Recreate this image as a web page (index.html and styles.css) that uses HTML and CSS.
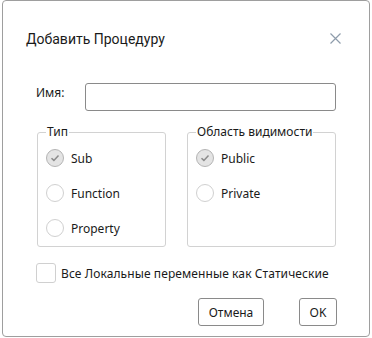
FILE: index.html
```html
<!DOCTYPE html>
<html lang="ru">
<head>
<meta charset="utf-8">
<title>Добавить Процедуру</title>
<link rel="stylesheet" href="styles.css">
</head>
<body>
<div class="dialog">
  <div class="header">
    <div class="title">Добавить Процедуру</div>
    <svg class="close" width="11" height="11" viewBox="0 0 11 11" aria-label="Закрыть"><path d="M0.5 0.5L10.5 10.5M10.5 0.5L0.5 10.5" stroke="#8e9cab" stroke-width="1.2" fill="none"/></svg>
  </div>
  <div class="body">
    <div class="name-row">
      <label class="name-label" for="name">Имя:</label>
      <input class="name-input" id="name" type="text">
    </div>
    <div class="groups">
      <fieldset class="group group-type">
        <legend>Тип</legend>
        <div class="radio checked"><span class="circle"><svg width="10" height="8" viewBox="0 0 10 8"><path d="M1.5 4.2L3.9 6.4L8.5 1.6" stroke="#8a8a8a" stroke-width="1.5" fill="none"/></svg></span><span class="radio-label">Sub</span></div>
        <div class="radio"><span class="circle"></span><span class="radio-label">Function</span></div>
        <div class="radio"><span class="circle"></span><span class="radio-label">Property</span></div>
      </fieldset>
      <fieldset class="group group-scope">
        <legend>Область видимости</legend>
        <div class="radio checked"><span class="circle"><svg width="10" height="8" viewBox="0 0 10 8"><path d="M1.5 4.2L3.9 6.4L8.5 1.6" stroke="#8a8a8a" stroke-width="1.5" fill="none"/></svg></span><span class="radio-label">Public</span></div>
        <div class="radio"><span class="circle"></span><span class="radio-label">Private</span></div>
      </fieldset>
    </div>
    <div class="check-row"><span class="box"></span><span class="check-label">Все Локальные переменные как Статические</span></div>
    <div class="buttons">
      <button class="btn btn-cancel" type="button">Отмена</button>
      <button class="btn btn-ok" type="button">OK</button>
    </div>
  </div>
</div>
</body>
</html>
```

FILE: styles.css
```css
html, body {
  margin: 0;
  background: #ffffff;
}
body {
  font-family: "Noto Sans", "Open Sans", sans-serif;
  font-size: 12px;
  color: #1a1a1a;
}
.dialog {
  box-sizing: border-box;
  margin-left: 2px;
  width: 368px;
  height: 337px;
  border: 1px solid #9e9e9e;
  border-radius: 4px;
  background: #fff;
}
.header {
  display: flex;
  align-items: flex-start;
  justify-content: space-between;
  padding: 28px 28px 0 23px;
  height: 20px;
}
.title {
  font-family: Roboto, "Noto Sans", sans-serif;
  font-size: 14px;
  line-height: 20px;
  color: #1a1a1a;
}
.close {
  display: block;
  margin-top: 4px;
}
.body {
  padding: 0 32px 0 33px;
}
.name-row {
  display: flex;
  align-items: flex-start;
  margin-top: 34px;
}
.name-label {
  width: 49px;
  line-height: 16px;
  margin-top: 2px;
}
.name-input {
  box-sizing: border-box;
  width: 251px;
  height: 28px;
  margin: 0;
  border: 1px solid #8a8a8a;
  border-radius: 3px;
  background: #fff;
  outline: none;
}
.groups {
  display: flex;
  gap: 21px;
  margin-top: 13px;
  margin-left: 1px;
}
.group {
  box-sizing: border-box;
  height: 123px;
  margin: 0;
  padding: 0 0 0 8px;
  border: 1px solid #d2d2d2;
  border-radius: 3px;
  min-width: 0;
}
.group-type { width: 129px; }
.group-scope { width: 149px; }
.group legend {
  padding: 0 1px;
  line-height: 16px;
}
.radio {
  display: flex;
  align-items: center;
  gap: 7px;
  height: 18px;
  margin-top: 17px;
}
.radio:first-of-type {
  margin-top: 9px;
}
.circle {
  box-sizing: border-box;
  width: 18px;
  height: 18px;
  border: 1px solid #d0d0d0;
  border-radius: 50%;
  display: flex;
  align-items: center;
  justify-content: center;
  background: #fff;
}
.checked .circle {
  border-color: #b4b4b4;
  background: #e4e4e4;
}
.check-row {
  display: flex;
  align-items: center;
  gap: 5px;
  margin-top: 16px;
}
.check-label {
  letter-spacing: 0.1px;
}
.box {
  box-sizing: border-box;
  width: 20px;
  height: 20px;
  border: 1px solid #d0d0d0;
  border-radius: 3px;
}
.buttons {
  display: flex;
  justify-content: flex-end;
  gap: 35px;
  margin-top: 15px;
}
.btn {
  box-sizing: border-box;
  height: 28px;
  margin: 0;
  padding: 0;
  border: 1px solid #8a8a8a;
  border-radius: 3px;
  background: #fff;
  font-family: inherit;
  font-size: 12px;
  color: #1a1a1a;
}
.btn-cancel { width: 66px; }
.btn-ok { width: 38px; }
```
